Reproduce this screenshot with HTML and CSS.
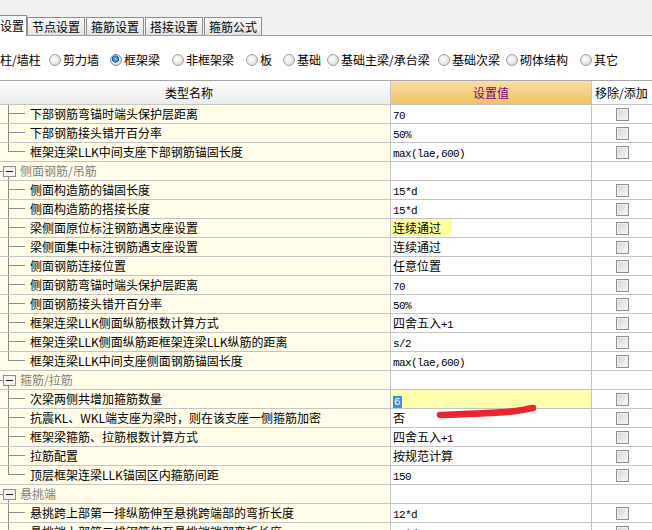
FILE: index.html
```html
<!DOCTYPE html>
<html lang="zh">
<head>
<meta charset="utf-8">
<title>钢筋设置</title>
<link rel="stylesheet" href="styles.css">
</head>
<body>
<div class="app">
  <div class="tabs">
    <div class="tab active">设置</div>
    <div class="tab">节点设置</div>
    <div class="tab">箍筋设置</div>
    <div class="tab">搭接设置</div>
    <div class="tab">箍筋公式</div>
  </div>

  <div class="radios">
    <span class="opt o1"><span class="lbl">柱/墙柱</span></span>
    <span class="opt o2"><i class="radio"></i><span class="lbl">剪力墙</span></span>
    <span class="opt o3"><i class="radio on"></i><span class="lbl">框架梁</span></span>
    <span class="opt o4"><i class="radio"></i><span class="lbl">非框架梁</span></span>
    <span class="opt o5"><i class="radio"></i><span class="lbl">板</span></span>
    <span class="opt o6"><i class="radio"></i><span class="lbl">基础</span></span>
    <span class="opt o7"><i class="radio"></i><span class="lbl">基础主梁/承台梁</span></span>
    <span class="opt o8"><i class="radio"></i><span class="lbl">基础次梁</span></span>
    <span class="opt o9"><i class="radio"></i><span class="lbl">砌体结构</span></span>
    <span class="opt o10"><i class="radio"></i><span class="lbl">其它</span></span>
  </div>

  <div class="grid">
    <div class="row head">
      <div class="name">类型名称</div>
      <div class="val">设置值</div>
      <div class="chk">移除/添加</div>
    </div>

    <div class="row"><div class="name"><i class="br"></i>下部钢筋弯锚时端头保护层距离</div><div class="val"><span class="m">70</span></div><div class="chk"><i class="cb"></i></div></div>
    <div class="row"><div class="name"><i class="br"></i>下部钢筋接头错开百分率</div><div class="val"><span class="m">50%</span></div><div class="chk"><i class="cb"></i></div></div>
    <div class="row"><div class="name"><i class="br last"></i>框架连梁LLK中间支座下部钢筋锚固长度</div><div class="val"><span class="m">max(lae,600)</span></div><div class="chk"><i class="cb"></i></div></div>

    <div class="row grp"><div class="name"><i class="tg"></i><span class="gt">侧面钢筋/吊筋</span></div><div class="val"></div><div class="chk"></div></div>
    <div class="row"><div class="name"><i class="br"></i>侧面构造筋的锚固长度</div><div class="val"><span class="m">15*d</span></div><div class="chk"><i class="cb"></i></div></div>
    <div class="row"><div class="name"><i class="br"></i>侧面构造筋的搭接长度</div><div class="val"><span class="m">15*d</span></div><div class="chk"><i class="cb"></i></div></div>
    <div class="row"><div class="name"><i class="br"></i>梁侧面原位标注钢筋遇支座设置</div><div class="val"><span class="hlbox">连续通过</span></div><div class="chk"><i class="cb"></i></div></div>
    <div class="row"><div class="name"><i class="br"></i>梁侧面集中标注钢筋遇支座设置</div><div class="val">连续通过</div><div class="chk"><i class="cb"></i></div></div>
    <div class="row"><div class="name"><i class="br"></i>侧面钢筋连接位置</div><div class="val">任意位置</div><div class="chk"><i class="cb"></i></div></div>
    <div class="row"><div class="name"><i class="br"></i>侧面钢筋弯锚时端头保护层距离</div><div class="val"><span class="m">70</span></div><div class="chk"><i class="cb"></i></div></div>
    <div class="row"><div class="name"><i class="br"></i>侧面钢筋接头错开百分率</div><div class="val"><span class="m">50%</span></div><div class="chk"><i class="cb"></i></div></div>
    <div class="row"><div class="name"><i class="br"></i>框架连梁LLK侧面纵筋根数计算方式</div><div class="val">四舍五入<span class="m">+1</span></div><div class="chk"><i class="cb"></i></div></div>
    <div class="row"><div class="name"><i class="br"></i>框架连梁LLK侧面纵筋距框架连梁LLK纵筋的距离</div><div class="val"><span class="m">s/2</span></div><div class="chk"><i class="cb"></i></div></div>
    <div class="row"><div class="name"><i class="br last"></i>框架连梁LLK中间支座侧面钢筋锚固长度</div><div class="val"><span class="m">max(lae,600)</span></div><div class="chk"><i class="cb"></i></div></div>

    <div class="row grp"><div class="name"><i class="tg"></i><span class="gt">箍筋/拉筋</span></div><div class="val"></div><div class="chk"></div></div>
    <div class="row"><div class="name"><i class="br"></i>次梁两侧共增加箍筋数量</div><div class="val hl"><span class="m sel">6</span></div><div class="chk"><i class="cb"></i></div></div>
    <div class="row"><div class="name"><i class="br"></i>抗震KL、WKL端支座为梁时，则在该支座一侧箍筋加密</div><div class="val">否</div><div class="chk"><i class="cb"></i></div></div>
    <div class="row"><div class="name"><i class="br"></i>框架梁箍筋、拉筋根数计算方式</div><div class="val">四舍五入<span class="m">+1</span></div><div class="chk"><i class="cb"></i></div></div>
    <div class="row"><div class="name"><i class="br"></i>拉筋配置</div><div class="val">按规范计算</div><div class="chk"><i class="cb"></i></div></div>
    <div class="row"><div class="name"><i class="br last"></i>顶层框架连梁LLK锚固区内箍筋间距</div><div class="val"><span class="m">150</span></div><div class="chk"><i class="cb"></i></div></div>

    <div class="row grp"><div class="name"><i class="tg"></i><span class="gt">悬挑端</span></div><div class="val"></div><div class="chk"></div></div>
    <div class="row"><div class="name"><i class="br"></i>悬挑跨上部第一排纵筋伸至悬挑跨端部的弯折长度</div><div class="val"><span class="m">12*d</span></div><div class="chk"><i class="cb"></i></div></div>
    <div class="row"><div class="name"><i class="br"></i>悬挑端上部第二排钢筋伸至悬挑端端部弯折长度</div><div class="val"><span class="m">10*d</span></div><div class="chk"><i class="cb"></i></div></div>
  </div>

  <svg class="scribble" width="652" height="530" viewBox="0 0 652 530" aria-hidden="true">
    <path d="M440 415 C 468 414, 500 413, 516 411 S 529 408, 533 408" fill="none" stroke="#ec2430" stroke-width="6.5" stroke-linecap="round" stroke-linejoin="round"/>
  </svg>
</div>
</body>
</html>
```

FILE: styles.css
```css
* {
  box-sizing: border-box;
  margin: 0;
  padding: 0;
}

html,
body {
  width: 652px;
  height: 530px;
  overflow: hidden;
  background: #ffffff;
}

body {
  font-family: "Noto Sans CJK SC", "Noto Sans", sans-serif;
  font-size: 12px;
  color: #000;
}

.app {
  position: relative;
  width: 652px;
  height: 530px;
  overflow: hidden;
}

/* ---------- tabs ---------- */
.tabs {
  display: flex;
  align-items: flex-end;
  height: 36px;
  background: #f0f0f0;
  border-bottom: 1px solid #a0a0a0;
}

.tab {
  height: 18px;
  padding: 0 4px;
  margin-right: 1px;
  border: 1px solid #8e8e8e;
  border-bottom: none;
  background: linear-gradient(#fcfcfc, #e2e2e2);
  line-height: 17px;
  white-space: nowrap;
}

.tab.active {
  width: 27px;
  height: 21px;
  margin-bottom: -1px;
  margin-right: 0;
  padding: 0;
  border-left: none;
  background: #ffffff;
  line-height: 19px;
  text-align: right;
  padding-right: 2px;
  overflow: hidden;
}

/* ---------- radios ---------- */
.radios {
  display: flex;
  align-items: center;
  height: 45px;
  padding-top: 4px;
  border-bottom: 1px solid #a8a8a8;
  white-space: nowrap;
}

.opt {
  display: flex;
  align-items: center;
  flex: none;
  line-height: 16px;
}

.o1 { width: 49px; }
.o2 { width: 61px; }
.o3 { width: 62px; }
.o4 { width: 74px; }
.o5 { width: 37px; }
.o6 { width: 44px; }
.o7 { width: 111px; }
.o8 { width: 68px; }
.o9 { width: 74px; }
.o10 { width: 60px; }

.radio {
  display: block;
  width: 12px;
  height: 12px;
  margin-right: 2px;
  border-radius: 50%;
  border: 1px solid #a2a2a2;
  background: radial-gradient(circle at 40% 40%, #ffffff 0%, #e6e6e6 55%, #c8c8c8 100%);
}

.radio.on {
  border-color: #7f8da0;
  background:
    radial-gradient(circle at 45% 40%, #8fd0ff 0%, #2f86d8 30%, #0d4f9e 42%, rgba(255,255,255,0) 46%),
    radial-gradient(circle at 40% 40%, #ffffff 0%, #e6e6e6 55%, #c8c8c8 100%);
}

/* ---------- grid ---------- */
.grid {
  display: flex;
  flex-direction: column;
}

.row {
  display: flex;
  height: 19px;
  border-bottom: 1px solid #c4c4c4;
  flex: none;
}

.name {
  display: flex;
  align-items: center;
  width: 391px;
  border-right: 1px solid #c4c4c4;
  background: #fffdea;
  line-height: 18px;
  white-space: nowrap;
  overflow: hidden;
}

.val {
  display: block;
  width: 201px;
  padding-left: 2px;
  border-right: 1px solid #c4c4c4;
  background: #ffffff;
  line-height: 18px;
  white-space: nowrap;
  overflow: hidden;
}

.chk {
  flex: 1;
  display: flex;
  justify-content: center;
  align-items: flex-start;
  background: #ffffff;
  white-space: nowrap;
}

.head {
  height: 24px;
}

.head .name {
  justify-content: center;
  padding-right: 12px;
  background: linear-gradient(#fdfdfd, #ebebeb);
  line-height: 22px;
}

.head .val {
  text-align: center;
  padding-left: 0;
  color: #800080;
  background: linear-gradient(#f9dda4, #f1c164);
  line-height: 23px;
}

.head .chk {
  align-items: center;
  justify-content: flex-start;
  padding-left: 3px;
  line-height: 22px;
}

/* tree branch */
.br {
  display: block;
  flex: none;
  width: 30px;
  height: 18px;
  background:
    linear-gradient(#8c8c8c, #8c8c8c) 8px 0 / 1px 18px no-repeat,
    linear-gradient(#8c8c8c, #8c8c8c) 8px 8px / 17px 1px no-repeat;
}

.br.last {
  background:
    linear-gradient(#8c8c8c, #8c8c8c) 8px 0 / 1px 9px no-repeat,
    linear-gradient(#8c8c8c, #8c8c8c) 8px 8px / 17px 1px no-repeat;
}

/* group toggle */
.tg {
  display: block;
  flex: none;
  width: 20px;
  height: 18px;
  background:
    linear-gradient(#222, #222) 6px 9px / 7px 1px no-repeat,
    linear-gradient(#f2f2f2, #f2f2f2) 4px 5px / 11px 9px no-repeat,
    linear-gradient(#8f8f8f, #8f8f8f) 3px 4px / 13px 11px no-repeat,
    linear-gradient(#8c8c8c, #8c8c8c) 0 9px / 3px 1px no-repeat,
    linear-gradient(#8c8c8c, #8c8c8c) 8px 15px / 1px 3px no-repeat;
}

.gt {
  color: #808080;
}

/* values */
.m {
  font-family: "Liberation Mono", monospace;
  font-size: 11px;
  letter-spacing: -0.6px;
}

.sel {
  display: inline-block;
  height: 12px;
  line-height: 12px;
  padding: 0 1px;
  letter-spacing: 0;
  color: #ffffff;
  background: #3390f4;
  vertical-align: -1px;
}

.val.hl {
  background: #ffffb0;
}

.hlbox {
  display: inline-block;
  width: 61px;
  height: 17px;
  margin-left: -2px;
  padding-left: 2px;
  background: #ffff99;
  line-height: 17px;
  vertical-align: top;
}

/* checkbox */
.cb {
  display: block;
  width: 13px;
  height: 13px;
  margin-top: 3px;
  margin-left: 1px;
  border: 1px solid #8e8f8f;
  background: linear-gradient(135deg, #d4d4d4, #f8f8f8);
  box-shadow: inset 0 0 0 1px #f0f0f0;
}

/* annotation overlay */
.scribble {
  position: absolute;
  left: 0;
  top: 0;
  pointer-events: none;
}
```
